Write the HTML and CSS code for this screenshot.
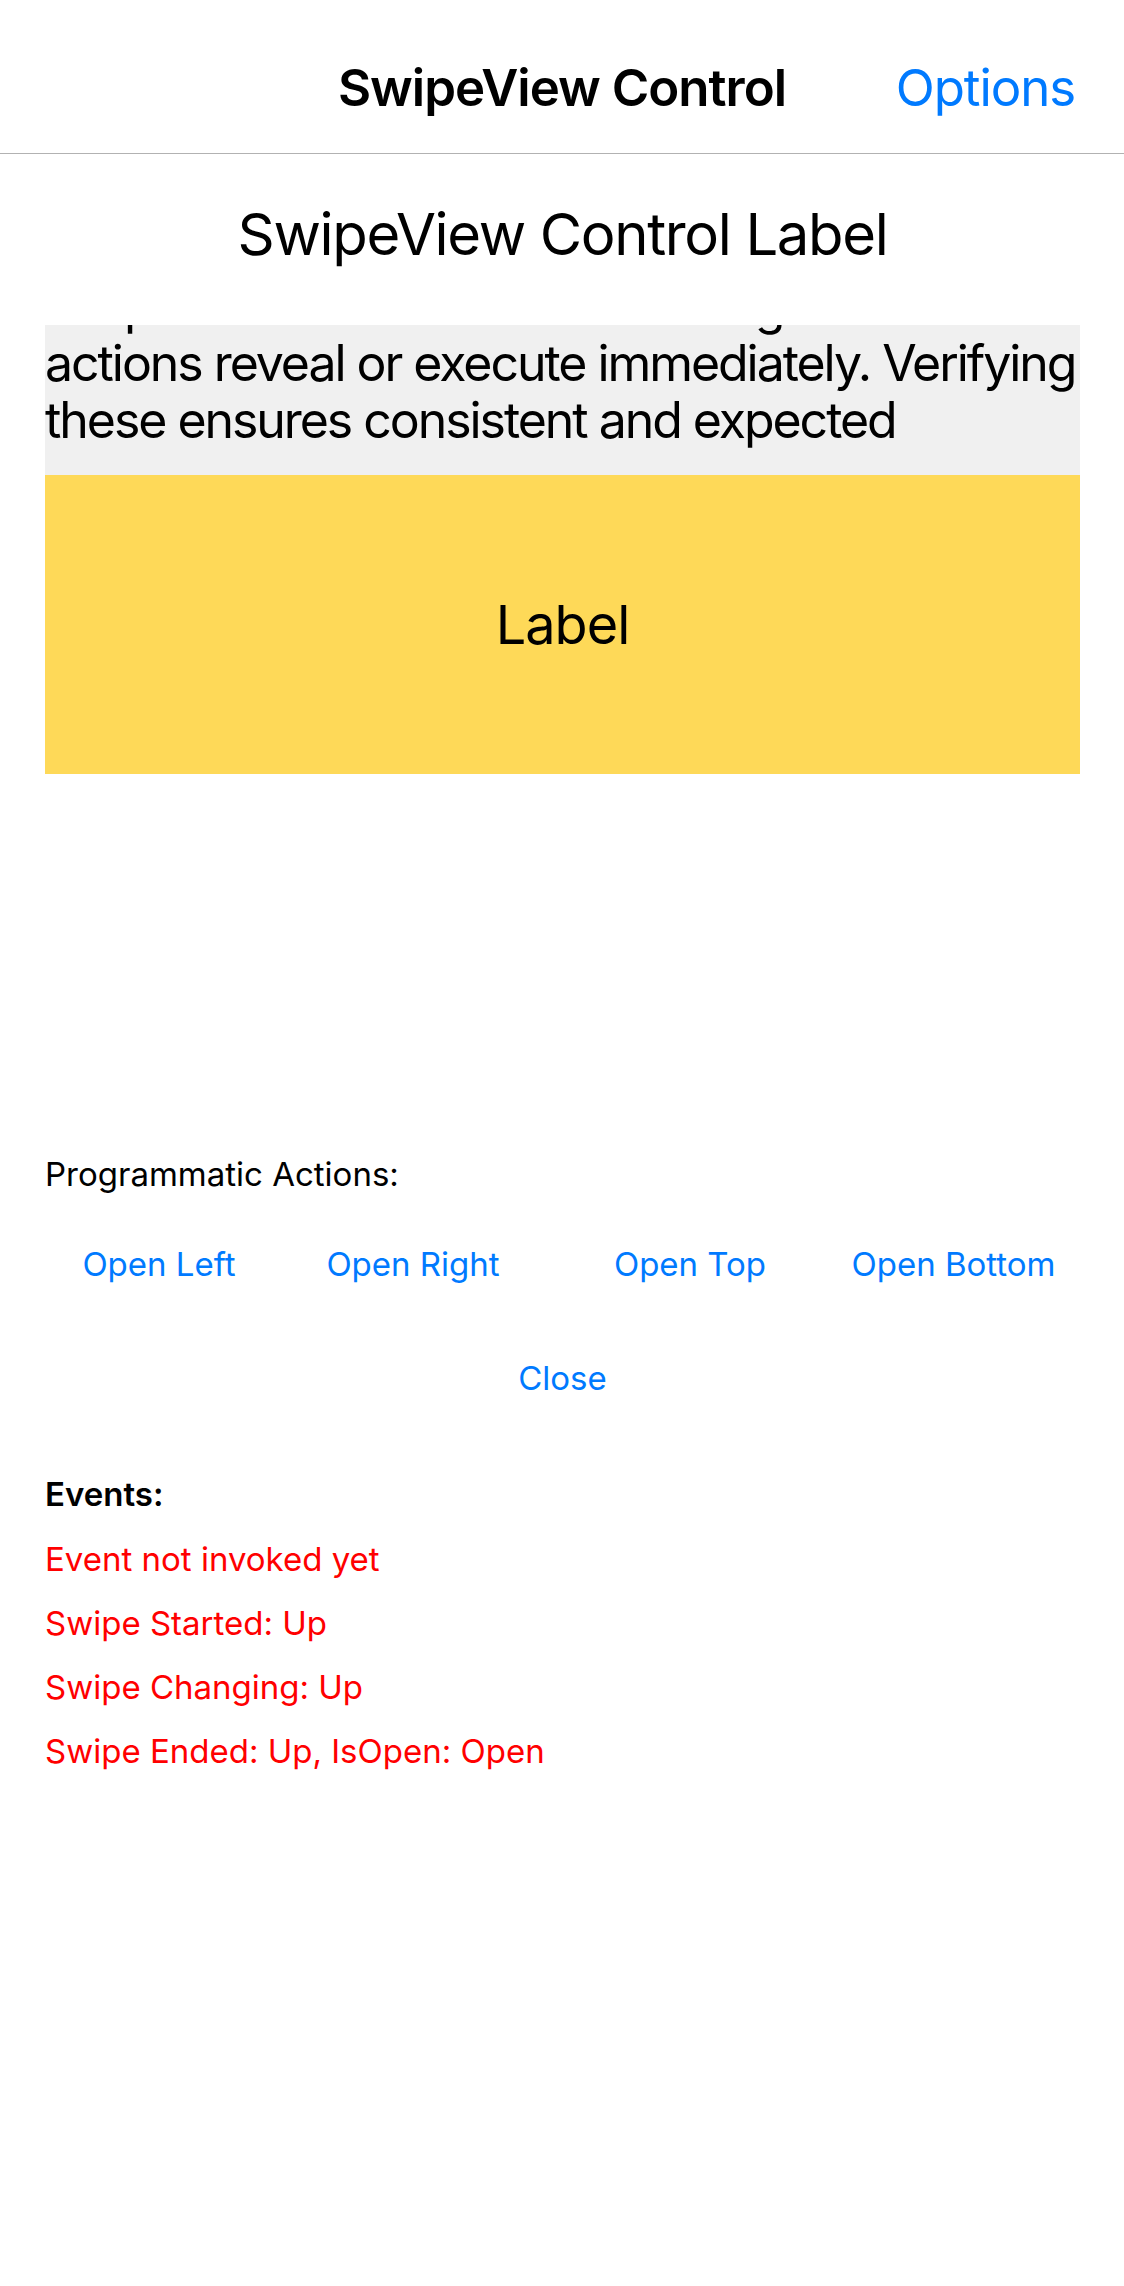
FILE: index.html
```html
<!DOCTYPE html>
<html lang="en">
<head>
<meta charset="utf-8">
<title>SwipeView Control</title>
<link rel="stylesheet" href="styles.css">
</head>
<body>
<header class="navbar">
  <div class="nav-side"></div>
  <h1 class="nav-title">SwipeView Control</h1>
  <div class="nav-side nav-right"><span class="nav-action">Options</span></div>
</header>
<main class="content">
  <h2 class="heading">SwipeView Control Label</h2>
  <div class="swipe-info">
    <p class="swipe-info-text">Swipe mode and threshold settings decide if swipe<br>actions reveal or execute immediately. Verifying<br>these ensures consistent and expected</p>
  </div>
  <div class="swipe-content">Label</div>

  <div class="section-title">Programmatic Actions:</div>
  <div class="actions-row">
    <span class="link-btn">Open Left</span>
    <span class="link-btn">Open Right</span>
    <span class="link-btn">Open Top</span>
    <span class="link-btn">Open Bottom</span>
  </div>
  <div class="close-row"><span class="link-btn">Close</span></div>

  <div class="events-title">Events:</div>
  <ul class="events">
    <li>Event not invoked yet</li>
    <li>Swipe Started: Up</li>
    <li>Swipe Changing: Up</li>
    <li>Swipe Ended: Up, IsOpen: Open</li>
  </ul>
</main>
</body>
</html>
```
FILE: styles.css
```css
* { box-sizing: border-box; }
html, body {
  margin: 0;
  padding: 0;
  background: #ffffff;
}
body {
  width: 1124px;
  font-family: Inter, "Noto Sans", sans-serif;
  color: #000000;
}
.navbar {
  height: 154px;
  display: grid;
  grid-template-columns: 1fr auto 1fr;
  align-items: start;
  padding: 57px 49px 0 49px;
  border-bottom: 1px solid #b2b2b2;
}
.nav-title {
  margin: 0;
  font-size: 51px;
  font-weight: 600;
  line-height: 62px;
  letter-spacing: -1px;
}
.nav-right {
  display: flex;
  justify-content: flex-end;
}
.nav-action {
  font-size: 51px;
  line-height: 62px;
  color: #007aff;
  letter-spacing: -1.1px;
}
.content {
  padding: 44px 44px 0 45px;
}
.heading {
  margin: 0;
  text-align: center;
  font-size: 58px;
  font-weight: 400;
  line-height: 72px;
  letter-spacing: -1.35px;
}
.swipe-info {
  margin-top: 55px;
  height: 150px;
  background: #f0f0f0;
  overflow: hidden;
}
.swipe-info-text {
  margin: -47px 0 0 0;
  font-size: 50px;
  line-height: 57px;
  letter-spacing: -2.05px;
  white-space: nowrap;
}
.swipe-content {
  height: 299px;
  background: #fed958;
  display: flex;
  align-items: center;
  justify-content: center;
  font-size: 54px;
  letter-spacing: -1px;
}
.section-title {
  margin-top: 380px;
  font-size: 33px;
  line-height: 40px;
}
.actions-row {
  margin-top: 50px;
  display: grid;
  grid-template-columns: 228px 280px 274px 253px;
  justify-items: center;
}
.link-btn {
  font-size: 33px;
  line-height: 40px;
  color: #007aff;
}
.close-row {
  margin-top: 74px;
  display: flex;
  justify-content: center;
}
.events-title {
  margin-top: 76px;
  font-size: 33px;
  line-height: 40px;
  font-weight: 600;
}
.events {
  list-style: none;
  margin: 25px 0 0 0;
  padding: 0;
  display: flex;
  flex-direction: column;
  gap: 24px;
}
.events li {
  font-size: 33px;
  line-height: 40px;
  color: #ff0000;
}
```
